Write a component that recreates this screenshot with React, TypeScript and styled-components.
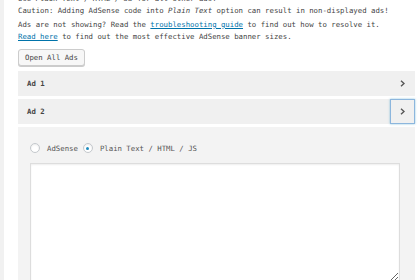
import styled, { createGlobalStyle } from 'styled-components';

const GlobalStyle = createGlobalStyle`
    html, body {
        margin: 0;
        padding: 0;
        background: #f1f1f1;
        overflow: hidden;
    }
    body {
        font-family: "DejaVu Sans Mono", "Liberation Mono", monospace;
        font-size: 7.33px;
        color: #444;
    }
`;

const Page = styled.div`
    margin-left: 4px;
    height: 280px;
    padding: 0 5px 0 14px;
    background: #fff;
    overflow: hidden;
`;

const Note = styled.p<{ $first?: boolean }>`
    margin: ${({ $first }) => ($first ? '-7px 0 2px' : '0')};
    line-height: 12px;
    white-space: nowrap;
`;

const Link = styled.a`
    color: #0073aa;
    text-decoration: underline;
`;

const Button = styled.button`
    display: block;
    margin-top: 6px;
    height: 17px;
    padding: 0 6px;
    border: 1px solid #ccc;
    border-radius: 3px;
    background: #f7f7f7;
    box-shadow: 0 1px 0 #ccc;
    font-family: inherit;
    font-size: inherit;
    color: #444;
    line-height: 15px;
`;

const Accordion = styled.div`
    margin-top: 5px;
    display: flex;
    flex-direction: column;
    gap: 3px;
`;

const Header = styled.div`
    display: flex;
    align-items: center;
    justify-content: space-between;
    height: 25px;
    padding-left: 9px;
    background: #f0f0f0;
    font-weight: bold;
    color: #444;
`;

const Toggle = styled.span<{ $focused?: boolean }>`
    display: flex;
    align-items: center;
    justify-content: center;
    width: 25px;
    height: 25px;
    box-sizing: border-box;
    border: 1px solid ${({ $focused }) => ($focused ? '#8cb6dd' : 'transparent')};
    box-shadow: ${({ $focused }) => ($focused ? '0 0 2px rgba(30,140,190,.5)' : 'none')};
`;

const Panel = styled.div`
    background: #f3f3f3;
    padding: 16px 15px 0 12px;
    height: 160px;
`;

const RadioRow = styled.div`
    display: flex;
    align-items: center;
    height: 10px;
    color: #555;
`;

const Radio = styled.span<{ $checked?: boolean }>`
    width: 10px;
    height: 10px;
    box-sizing: border-box;
    border-radius: 50%;
    border: 1px solid #c4c8cc;
    background: #fff;
    box-shadow: inset 0 1px 2px rgba(0, 0, 0, 0.08);
    display: flex;
    align-items: center;
    justify-content: center;
    margin-right: 7px;

    &::after {
        content: '';
        display: ${({ $checked }) => ($checked ? 'block' : 'none')};
        width: 3px;
        height: 3px;
        border-radius: 50%;
        background: #1e8cbe;
    }
`;

const RadioLabel = styled.span`
    margin-right: 5px;
`;

const Code = styled.textarea`
    display: block;
    margin-top: 10px;
    width: 100%;
    height: 119px;
    box-sizing: border-box;
    border: 1px solid #ddd;
    box-shadow: inset 0 1px 2px rgba(0, 0, 0, 0.07);
    background: #fff;
    resize: vertical;
`;

const Chevron = () => (
    <svg width="5" height="7" viewBox="0 0 5 7">
        <path d="M1 0.8 L4 3.5 L1 6.2" fill="none" stroke="#555" strokeWidth="1.4" />
    </svg>
);

export default function App() {
    return (
        <>
            <GlobalStyle />
            <Page>
                <Note $first>
                    Use <i>Plain Text / HTML / JS</i> for all other ads!
                    <br />
                    Caution: Adding AdSense code into <i>Plain Text</i> option can result in non-displayed ads!
                </Note>
                <Note>
                    Ads are not showing? Read the <Link>troubleshooting guide</Link> to find out how to resolve it.
                    <br />
                    <Link>Read here</Link> to find out the most effective AdSense banner sizes.
                </Note>
                <Button>Open All Ads</Button>
                <Accordion>
                    <Header>
                        Ad 1
                        <Toggle>
                            <Chevron />
                        </Toggle>
                    </Header>
                    <Header>
                        Ad 2
                        <Toggle $focused>
                            <Chevron />
                        </Toggle>
                    </Header>
                    <Panel>
                        <RadioRow>
                            <Radio />
                            <RadioLabel>AdSense</RadioLabel>
                            <Radio $checked />
                            <RadioLabel>Plain Text / HTML / JS</RadioLabel>
                        </RadioRow>
                        <Code />
                    </Panel>
                </Accordion>
            </Page>
        </>
    );
}
